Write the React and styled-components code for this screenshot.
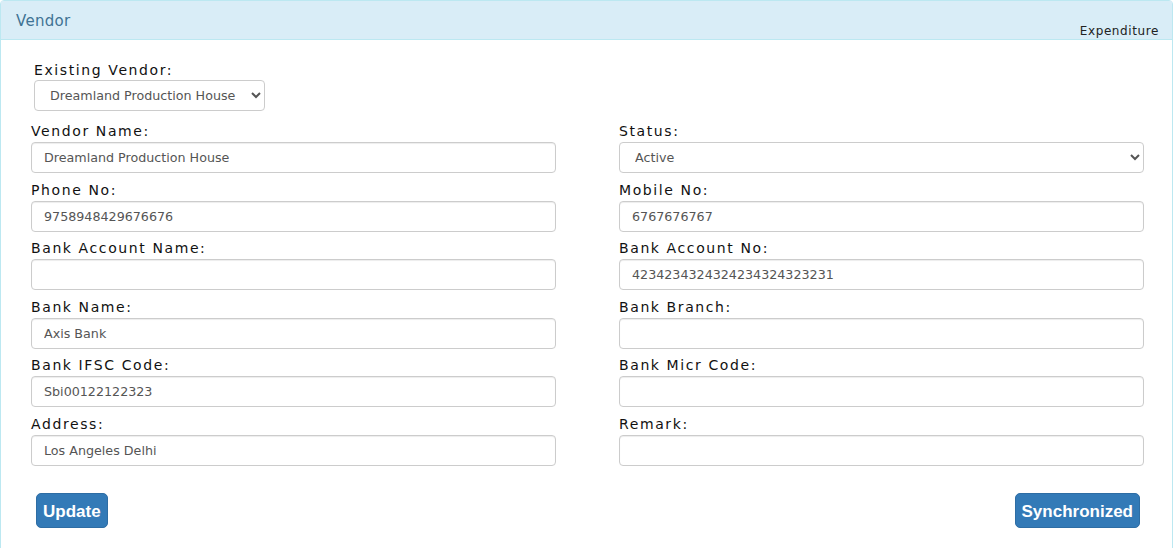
import React from 'react'
import styled, { createGlobalStyle } from 'styled-components'

const GlobalStyle = createGlobalStyle`
    html, body {
        margin: 0;
        padding: 0;
        background: #fff;
        font-family: "DejaVu Sans", Verdana, sans-serif;
    }
    * {
        box-sizing: border-box;
    }
`

const Panel = styled.section`
    width: 1173px;
    min-height: 600px;
    border: 1px solid #bce8f1;
    border-radius: 4px 4px 0 0;
    background: #fff;
`

const PanelHeading = styled.header`
    height: 39px;
    background-color: #d9edf7;
    border-bottom: 1px solid #bce8f1;
    display: flex;
    justify-content: space-between;
    padding: 0 13px 0 15px;
`

const PanelTitle = styled.h3`
    margin: 0;
    padding-top: 10px;
    font-size: 15px;
    font-weight: normal;
    letter-spacing: 0.3px;
    color: #3f7394;
    line-height: 20px;
`

const Crumb = styled.span`
    align-self: flex-end;
    margin-bottom: 0;
    font-size: 12px;
    letter-spacing: 0.6px;
    color: #222;
    line-height: 16px;
`

const PanelBody = styled.div`
    padding: 20px 0 0 0;
`

const TopField = styled.div`
    padding-left: 33px;
    margin-bottom: 10px;
    display: flex;
    flex-direction: column;
    align-items: flex-start;
`

const FormGrid = styled.div`
    display: grid;
    grid-template-columns: 525px 525px;
    column-gap: 63px;
    padding-left: 30px;
`

const Field = styled.div`
    display: flex;
    flex-direction: column;
    margin-bottom: 6.5px;
`

const Label = styled.label`
    font-size: 14px;
    letter-spacing: 1.6px;
    line-height: 20px;
    color: #111;
    margin-bottom: ${props => props.$tight ? '0' : '1px'};
`

const Input = styled.input`
    height: 31px;
    width: 100%;
    border: 1px solid #ccc;
    border-radius: 4px;
    padding: 0 12px;
    font-family: "DejaVu Sans", Verdana, sans-serif;
    font-size: 12.7px;
    color: #555;
    background: #fff;
    box-shadow: inset 0 1px 1px rgba(0, 0, 0, 0.075);
    outline: none;
`

const Select = styled.select`
    height: 31px;
    width: ${props => props.$width || '100%'};
    border: 1px solid #ccc;
    border-radius: 4px;
    padding: 0 6px 0 11px;
    font-family: "DejaVu Sans", Verdana, sans-serif;
    font-size: 12.7px;
    color: #555;
    background: #fff;
    outline: none;
`

const ButtonRow = styled.div`
    display: flex;
    justify-content: space-between;
    padding: 20.5px 32px 0 35px;
`

const Button = styled.button`
    height: 35px;
    padding: 3px 6px 0;
    background-color: #337ab7;
    border: 1px solid #2e6da4;
    border-radius: 5px;
    color: #fff;
    font-family: "Liberation Sans", Arial, sans-serif;
    font-weight: bold;
    font-size: 17px;
    cursor: pointer;
`

const fields = [
    ['Vendor Name:', 'Dreamland Production House', 'Status:', 'select'],
    ['Phone No:', '9758948429676676', 'Mobile No:', '6767676767'],
    ['Bank Account Name:', '', 'Bank Account No:', '4234234324324234324323231'],
    ['Bank Name:', 'Axis Bank', 'Bank Branch:', ''],
    ['Bank IFSC Code:', 'Sbi00122122323', 'Bank Micr Code:', ''],
    ['Address:', 'Los Angeles Delhi', 'Remark:', '']
]

const App = () => {
    return (
        <>
            <GlobalStyle />
            <Panel>
                <PanelHeading>
                    <PanelTitle>Vendor</PanelTitle>
                    <Crumb>Expenditure</Crumb>
                </PanelHeading>
                <PanelBody>
                    <TopField>
                        <Label $tight>Existing Vendor:</Label>
                        <Select $width="231px" defaultValue="dph">
                            <option value="dph">Dreamland Production House</option>
                        </Select>
                    </TopField>
                    <FormGrid>
                        {fields.map(([l1, v1, l2, v2]) => (
                            <React.Fragment key={l1}>
                                <Field>
                                    <Label>{ l1 }</Label>
                                    <Input defaultValue={ v1 } />
                                </Field>
                                <Field>
                                    <Label>{ l2 }</Label>
                                    {v2 === 'select'
                                        ? <Select defaultValue="active">
                                            <option value="active">Active</option>
                                            <option value="inactive">Inactive</option>
                                        </Select>
                                        : <Input defaultValue={ v2 } />}
                                </Field>
                            </React.Fragment>
                        ))}
                    </FormGrid>
                    <ButtonRow>
                        <Button>Update</Button>
                        <Button>Synchronized</Button>
                    </ButtonRow>
                </PanelBody>
            </Panel>
        </>
    )
}

export default App
